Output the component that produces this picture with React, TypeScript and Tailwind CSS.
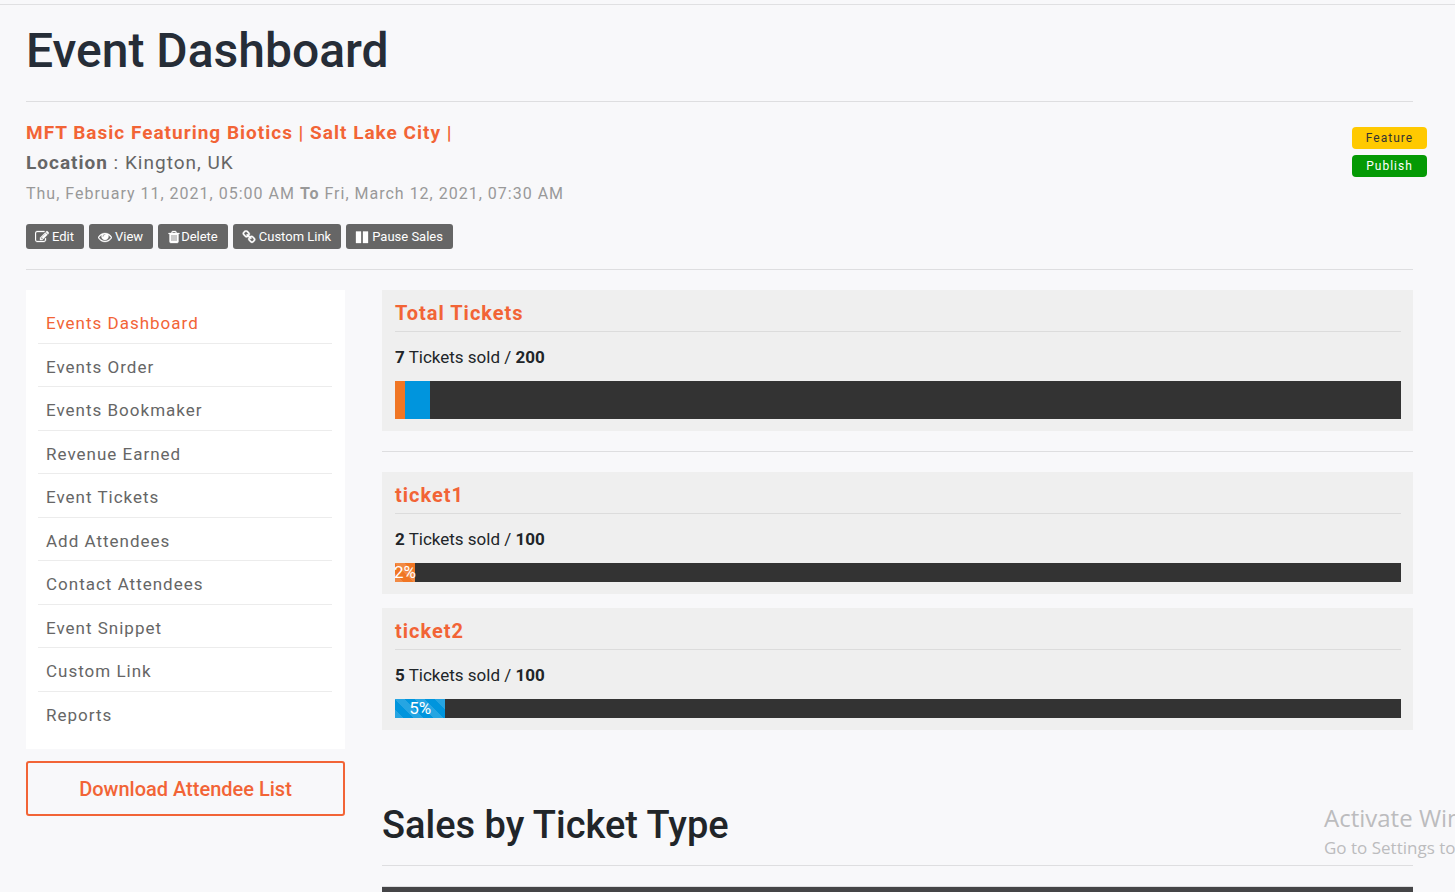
import type { ReactNode } from "react";

type Tone = "orange" | "blue";

const navItems = [
  "Events Dashboard",
  "Events Order",
  "Events Bookmaker",
  "Revenue Earned",
  "Event Tickets",
  "Add Attendees",
  "Contact Attendees",
  "Event Snippet",
  "Custom Link",
  "Reports",
];

const tickets: { name: string; sold: number; total: number; tone: Tone }[] = [
  { name: "ticket1", sold: 2, total: 100, tone: "orange" },
  { name: "ticket2", sold: 5, total: 100, tone: "blue" },
];

const toneClass: Record<Tone, string> = {
  orange: "bg-[#f07624]",
  blue: "bg-[#0095dd]",
};

const stripes =
  "bg-[linear-gradient(45deg,rgba(255,255,255,0.15)_25%,transparent_25%,transparent_50%,rgba(255,255,255,0.15)_50%,rgba(255,255,255,0.15)_75%,transparent_75%,transparent)] bg-[length:20px_20px]";

const icons = {
  edit: "M888 1184l116-116-152-152-116 116v56h96v96h56zm440-720q-16-16-33 1l-350 350q-17 17-1 33t33-1l350-350q17-17 1-33zm80 594v190q0 119-84.5 203.5t-203.5 84.5h-832q-119 0-203.5-84.5t-84.5-203.5v-832q0-119 84.5-203.5t203.5-84.5h832q63 0 117 25 15 7 18 23 3 17-9 29l-49 49q-14 14-32 8-23-6-45-6h-832q-66 0-113 47t-47 113v832q0 66 47 113t113 47h832q66 0 113-47t47-113v-126q0-13 9-22l64-64q15-15 35-7t20 29zm-96-738l288 288-672 672h-288v-288zm444 132l-92 92-288-288 92-92q28-28 68-28t68 28l152 152q28 28 28 68t-28 68z",
  eye: "M1664 960q-152-236-381-353 61 104 61 225 0 185-131.5 316.5t-316.5 131.5-316.5-131.5-131.5-316.5q0-121 61-225-229 117-381 353 133 205 333.5 326.5t434.5 121.5 434.5-121.5 333.5-326.5zm-720-384q0-20-14-34t-34-14q-125 0-214.5 89.5t-89.5 214.5q0 20 14 34t34 14 34-14 14-34q0-86 61-147t147-61q20 0 34-14t14-34zm848 384q0 34-20 69-140 230-376.5 368.5t-499.5 138.5-499.5-139-376.5-368q-20-35-20-69t20-69q140-229 376.5-368t499.5-139 499.5 139 376.5 368q20 35 20 69z",
  trash:
    "M704 1376v-704q0-14-9-23t-23-9h-64q-14 0-23 9t-9 23v704q0 14 9 23t23 9h64q14 0 23-9t9-23zm256 0v-704q0-14-9-23t-23-9h-64q-14 0-23 9t-9 23v704q0 14 9 23t23 9h64q14 0 23-9t9-23zm256 0v-704q0-14-9-23t-23-9h-64q-14 0-23 9t-9 23v704q0 14 9 23t23 9h64q14 0 23-9t9-23zm-544-992h448l-48-117q-7-9-17-11h-317q-10 2-17 11zm928 32v64q0 14-9 23t-23 9h-96v948q0 83-47 143.5t-113 60.5h-832q-66 0-113-58.5t-47-141.5v-952h-96q-14 0-23-9t-9-23v-64q0-14 9-23t23-9h309l70-167q15-37 54-63t79-26h320q40 0 79 26t54 63l70 167h309q14 0 23 9t9 23z",
  link: "M1520 1216q0-40-28-68l-208-208q-28-28-68-28-42 0-72 32 3 3 19 18.5t21.5 21.5 15 19 13 25.5 3.5 27.5q0 40-28 68t-68 28q-15 0-27.5-3.5t-25.5-13-19-15-21.5-21.5-18.5-19q-33 31-33 73 0 40 28 68l206 207q27 27 68 27 40 0 68-26l147-146q28-28 28-67zm-703-705q0-40-28-68l-206-207q-28-28-68-28-39 0-68 27l-147 146q-28 28-28 67 0 40 28 68l208 208q27 27 68 27 42 0 72-31-3-3-19-18.5t-21.5-21.5-15-19-13-25.5-3.5-27.5q0-40 28-68t68-28q15 0 27.5 3.5t25.5 13 19 15 21.5 21.5 18.5 19q33-31 33-73zm895 705q0 120-85 203l-147 146q-83 83-203 83-121 0-204-85l-206-207q-83-83-83-203 0-123 88-209l-88-88q-86 88-208 88-120 0-204-84l-208-208q-84-84-84-204t85-203l147-146q83-83 203-83 121 0 204 85l206 207q83 83 83 203 0 123-88 209l88 88q86-88 208-88 120 0 204 84l208 208q84 84 84 204z",
  pause: "M128 192h640v1472h-640zM1024 192h640v1472h-640z",
};

function Icon({ name }: { name: keyof typeof icons }) {
  return (
    <svg viewBox="0 0 1792 1792" className="size-[14px] shrink-0" fill="currentColor" stroke="currentColor" strokeWidth="40" aria-hidden="true">
      <path d={icons[name]} />
    </svg>
  );
}

function Action({ icon, gap, children }: { icon: keyof typeof icons; gap: string; children: ReactNode }) {
  return (
    <button
      type="button"
      className={`flex h-[25px] items-center rounded-[3px] bg-[#666] pr-2.5 pl-[9px] text-[13px] whitespace-nowrap text-white ${gap}`}
    >
      <Icon name={icon} />
      {children}
    </button>
  );
}

function Panel({ title, sold, total, children }: { title: string; sold: number; total: number; children: ReactNode }) {
  return (
    <section className="bg-[#efefef] pt-3 pr-3 pb-3 pl-[13px]">
      <h2 className="border-b border-[#dcdcdc] pb-1.5 text-xl leading-[23px] font-bold tracking-[1px] text-[#f26436]">
        {title}
      </h2>
      <p className="pt-[13px] pb-3 text-[17px] leading-6">
        <b>{sold}</b> Tickets sold / <b>{total}</b>
      </p>
      {children}
    </section>
  );
}

export default function App() {
  return (
    <div className="relative flex h-screen flex-col overflow-hidden bg-[#f8f8fa] font-['Roboto','Liberation_Sans',sans-serif] text-[#212529]">
      <div className="h-[5px] shrink-0 border-b border-[#e0e0e2]" />

      <div className="pr-[42px] pl-[26px]">
        <header className="border-b border-[#dedee0] pt-[18px] pb-[22px]">
          <h1 className="text-5xl leading-[56px] font-medium text-[#262d37]">Event Dashboard</h1>
        </header>

        <div className="flex items-start justify-between border-b border-[#dedee0] pt-4 pb-5">
          <div>
            <h2 className="text-[19px] leading-[30px] font-bold tracking-[1px] text-[#f26436]">
              MFT Basic Featuring Biotics | Salt Lake City |
            </h2>
            <p className="text-[19px] leading-[30px] tracking-[1px] text-[#666]">
              <b>Location</b> : Kington, UK
            </p>
            <p className="text-base leading-8 tracking-[1px] text-[#999]">
              Thu, February 11, 2021, 05:00 AM <b>To</b> Fri, March 12, 2021, 07:30 AM
            </p>
            <div className="mt-3.5 flex gap-[5px]">
              <Action icon="edit" gap="gap-[3px]">Edit</Action>
              <Action icon="eye" gap="gap-[3px]">View</Action>
              <Action icon="trash" gap="gap-0">Delete</Action>
              <Action icon="link" gap="gap-[3px]">Custom Link</Action>
              <Action icon="pause" gap="gap-[3px]">Pause Sales</Action>
            </div>
          </div>
          <div className="mt-[9px] -mr-3.5 flex w-[75px] flex-col gap-1.5">
            <button type="button" className="h-[22px] rounded bg-[#ffc900] text-xs tracking-[1px] text-[#333]">
              Feature
            </button>
            <button type="button" className="h-[22px] rounded bg-[#049a04] text-xs tracking-[1px] text-white">
              Publish
            </button>
          </div>
        </div>

        <div className="mt-5 flex items-start gap-[37px]">
          <aside className="w-[23%] shrink-0">
            <nav className="bg-white pt-2.5 pr-[13px] pb-3.5 pl-3">
              <ul className="grid h-[435px] auto-rows-fr divide-y divide-[#ececec]">
                {navItems.map((item, i) => (
                  <li key={item}>
                    <a
                      href="#"
                      className={`block px-2 pt-[11px] text-[17px] leading-6 tracking-[1px] ${i === 0 ? "text-[#f26436]" : "text-[#666]"}`}
                    >
                      {item}
                    </a>
                  </li>
                ))}
              </ul>
            </nav>
            <button
              type="button"
              className="mt-3 h-[55px] w-full rounded-[3px] border-2 border-[#f26436] text-xl font-medium text-[#f26436]"
            >
              Download Attendee List
            </button>
          </aside>

          <main className="min-w-0 flex-1">
            <Panel title="Total Tickets" sold={7} total={200}>
              <div className="flex h-[38px] bg-[#333]">
                {tickets.map((t) => (
                  <div key={t.name} className={toneClass[t.tone]} style={{ width: `${t.sold / 2}%` }} />
                ))}
              </div>
            </Panel>

            <hr className="my-5 border-[#dedee0]" />

            <div className="flex flex-col gap-3.5">
              {tickets.map((t) => (
                <Panel key={t.name} title={t.name} sold={t.sold} total={t.total}>
                  <div className="flex h-[19px] bg-[#333]">
                    <div
                      className={`flex items-center justify-center text-[17px] leading-[19px] text-white ${toneClass[t.tone]} ${stripes}`}
                      style={{ width: `${(t.sold / t.total) * 100}%` }}
                    >
                      {t.sold}%
                    </div>
                  </div>
                </Panel>
              ))}
            </div>

            <h2 className="mt-[72px] border-b border-[#dedee0] pb-4 text-[38px] leading-[47px] font-medium">
              Sales by Ticket Type
            </h2>
            <div className="mt-5 h-12 border-t border-[#dedee0] bg-[#454547]" />
          </main>
        </div>
      </div>

      <div className="absolute top-[802px] left-[1324px] font-['Open_Sans','Noto_Sans',sans-serif] whitespace-nowrap text-[#bcbcbe]">
        <p className="text-2xl leading-[31px]">Activate Windows</p>
        <p className="text-[17px] leading-[29px]">Go to Settings to activate Windows.</p>
      </div>
    </div>
  );
}
